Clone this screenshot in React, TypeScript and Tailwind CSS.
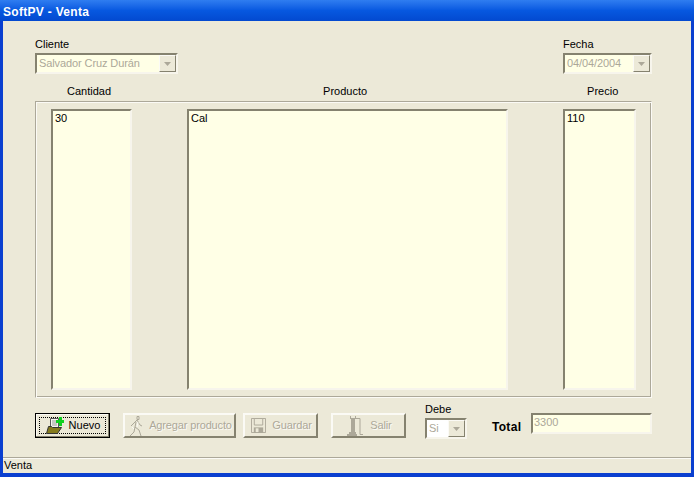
const font = { fontFamily: '"Liberation Sans", Arial, sans-serif' };

function Sunken({ className = "", children }: { className?: string; children?: React.ReactNode }) {
  return (
    <div className={`border-2 border-t-[#85826f] border-l-[#85826f] border-r-[#f7f5ec] border-b-[#f7f5ec] box-border ${className}`}>
      {children}
    </div>
  );
}

function Combo({ text, width, bg = "bg-[#ffffe6]" }: { text: string; width: string; bg?: string }) {
  return (
    <Sunken className={`${width} h-[21px] ${bg} flex items-stretch`}>
      <span className="flex-1 pl-[2px] text-[11px] tracking-[-0.1px] leading-[17px] text-[#aca899] overflow-hidden whitespace-nowrap">{text}</span>
      <span className="w-[17px] bg-[#ece9d8] border border-t-[#fbfaf5] border-l-[#fbfaf5] border-r-[#85826f] border-b-[#85826f] flex items-center justify-center">
        <svg width="7" height="4" viewBox="0 0 7 4"><path d="M0 0h7L3.5 4z" fill="#aca899" /></svg>
      </span>
    </Sunken>
  );
}

function ListBox({ text, width }: { text: string; width: string }) {
  return (
    <Sunken className={`${width} h-[281px] bg-[#ffffe6] pl-[2px] text-[11px] leading-[14px] text-black`}>{text}</Sunken>
  );
}

function Button({ icon, label, width, disabled = true }: { icon: React.ReactNode; label: string; width: string; disabled?: boolean }) {
  if (!disabled) {
    return (
      <div className={`${width} shrink-0 h-[25px] border border-black bg-[#ece9d8] shadow-[inset_-1px_-1px_0_#85826f,inset_1px_1px_0_#fbfaf5] p-[3px]`}>
        <div className="h-full border border-dotted border-black flex items-center justify-center gap-[5px] pl-[1px] text-[11px] text-black">
          {icon}
          <span>{label}</span>
        </div>
      </div>
    );
  }
  return (
    <div className={`${width} shrink-0 h-[25px] border-2 border-t-[#fbfaf5] border-l-[#fbfaf5] border-r-[#85826f] border-b-[#85826f] bg-[#ece9d8] flex items-center justify-center gap-[6px] pl-[2px] text-[11px] tracking-[-0.15px] text-[#aca899] [text-shadow:1px_1px_0_#fbfaf5] whitespace-nowrap`}>
      {icon}
      <span>{label}</span>
    </div>
  );
}

const FolderIcon = (
  <svg width="18" height="17" viewBox="0 0 18 17">
    <path d="M4.5 1.5h8v11h-8z" fill="#f4f4ee" stroke="#555" strokeWidth="1" />
    <path d="M6 4h5M6 6h5M6 8h5" stroke="#999" />
    <path d="M10 3h3V0h3v3h2v3h-2v3h-3V6h-3z" fill="#10d020" />
    <path d="M.5 16.5l2-7h3l1 1h9l-4 6z" fill="#847a1c" stroke="#333" strokeWidth="1" />
  </svg>
);
const WalkIcon = (
  <svg width="14" height="20" viewBox="0 0 14 20" fill="none" stroke="#aca899" strokeWidth="1">
    <path d="M8 .5h2v3H8zM8 4L2 10M8 4l3 5 2 1M7 6l-1 5 4 3 2 6M6 11l-1 5-4 4" />
    <path d="M3 11l2 2M9 6l-1 5" stroke="#fbfaf5" />
  </svg>
);
const SaveIcon = (
  <svg width="15" height="15" viewBox="0 0 16 16" fill="none">
    <path d="M.5.5h15v15H.5z" stroke="#aca899" />
    <path d="M3.5.5h9v7h-9z" stroke="#aca899" fill="#ece9d8" />
    <path d="M3 10h10v6H3z" fill="#aca899" />
    <path d="M5 11h3v4H5z" fill="#ece9d8" />
  </svg>
);
const DoorIcon = (
  <svg width="17" height="20" viewBox="0 0 17 20" fill="none">
    <path d="M0 18h10v2H0zM2 16h7v2H2z" fill="#aca899" />
    <path d="M4 3h4v13H4z" fill="#aca899" />
    <path d="M3.5 0v3M8.5 0v3M3 2.5h10V16" stroke="#aca899" />
    <path d="M13 16v2.5h3" stroke="#aca899" />
  </svg>
);

export default function App() {
  return (
    <div style={font} className="w-[694px] h-[477px] bg-[#0a3fd0] flex flex-col overflow-hidden">
      <div className="h-[21px] shrink-0 bg-gradient-to-b from-[#2f7df0] via-[#0758e0] to-[#0349d0] pl-[3px] pt-[3px] flex items-center">
        <span className="font-bold text-white text-[12px] tracking-[0.3px]">SoftPV - Venta</span>
      </div>
      <div className="flex-1 mx-[3px] mb-[4px] bg-[#ece9d8] flex flex-col text-[11px] text-black min-h-0">
        <div className="flex-1 pl-[32px] pr-[39px] min-h-0">
          <div className="flex justify-between pt-[16px]">
            <div>
              <div className="h-[16px] leading-[14px]">Cliente</div>
              <Combo text="Salvador Cruz Durán" width="w-[143px]" />
            </div>
            <div>
              <div className="h-[16px] leading-[14px]">Fecha</div>
              <Combo text="04/04/2004" width="w-[89px]" />
            </div>
          </div>
          <div className="flex h-[27px] items-end pb-[3px] leading-[14px]">
            <span className="ml-[32px]">Cantidad</span>
            <span className="ml-[212px]">Producto</span>
            <span className="ml-[220px]">Precio</span>
          </div>
          <div className="w-[617px] h-[297px] border border-t-[#aca899] border-l-[#aca899] border-r-[#fbfaf5] border-b-[#fbfaf5] shadow-[inset_1px_1px_0_#fbfaf5,inset_-1px_-1px_0_#aca899] pt-[7px] pl-[15px] flex">
            <ListBox text="30" width="w-[81px]" />
            <div className="ml-[55px]"><ListBox text="Cal" width="w-[321px]" /></div>
            <div className="ml-[55px]"><ListBox text="110" width="w-[73px]" /></div>
          </div>
          <div className="flex mt-[15px] items-start">
            <Button disabled={false} icon={FolderIcon} label="Nuevo" width="w-[75px]" />
            <div className="ml-[13px] shrink-0"><Button icon={WalkIcon} label="Agregar producto" width="w-[113px]" /></div>
            <div className="ml-[7px] shrink-0"><Button icon={SaveIcon} label="Guardar" width="w-[75px]" /></div>
            <div className="ml-[13px] shrink-0"><Button icon={DoorIcon} label="Salir" width="w-[75px]" /></div>
            <div className="ml-[19px] -mt-[10px] shrink-0">
              <div className="h-[15px] leading-[13px]">Debe</div>
              <Combo text="Si" width="w-[42px]" bg="bg-white" />
            </div>
            <span className="ml-[25px] mt-[7px] font-bold text-[12px] leading-[14px] tracking-[0.3px] shrink-0">Total</span>
            <div className="ml-auto shrink-0">
              <Sunken className="w-[121px] h-[21px] bg-[#ffffe6] pl-[1px] text-[11px] leading-[14px] text-[#aca899]">3300</Sunken>
            </div>
          </div>
        </div>
        <div className="h-[16px] shrink-0 border-t border-t-[#aca899] shadow-[inset_0_1px_0_#fbfaf5] pl-[1px] leading-[15px]">Venta</div>
      </div>
    </div>
  );
}
